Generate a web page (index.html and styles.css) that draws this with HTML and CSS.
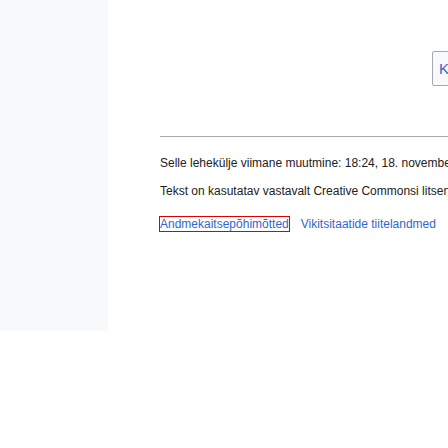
FILE: index.html
```html
<!DOCTYPE html>
<html lang="et">
<head>
<meta charset="utf-8">
<title>Vikipeedia</title>
<link rel="stylesheet" href="styles.css">
</head>
<body>
<div class="page">
  <aside class="sidebar"></aside>
  <main class="main">
    <div class="toolbar">
      <button class="btn" type="button">Kuva</button>
    </div>
    <hr class="rule">
    <footer class="footer">
      <p class="info">Selle lehekülje viimane muutmine: 18:24, 18. november 2023.</p>
      <p class="info">Tekst on kasutatav vastavalt Creative Commonsi litsentsile „Autorile viitamine + jagamine samadel tingimustel“; sellele võivad lisanduda täiendavad tingimused.</p>
      <ul class="links">
        <li><a class="link focus" href="#">Andmekaitsepõhimõtted</a></li>
        <li><a class="link" href="#">Vikitsitaatide tiitelandmed</a></li>
        <li><a class="link" href="#">Lahtiütlused</a></li>
      </ul>
    </footer>
  </main>
</div>
</body>
</html>
```

FILE: styles.css
```css
html, body {
  margin: 0;
  padding: 0;
  background: #ffffff;
  overflow: hidden;
}
body {
  width: 448px;
  height: 448px;
  font-family: "Liberation Sans", Arial, sans-serif;
  color: #202122;
}
.page {
  display: flex;
  align-items: flex-start;
  width: 1000px;
}
.sidebar {
  flex: none;
  width: 108px;
  height: 331px;
  background: #f8f9fa;
}
.main {
  flex: none;
  width: 700px;
  padding-left: 52px;
}
.toolbar {
  display: flex;
  padding-top: 51px;
  padding-left: 272px;
}
.btn {
  box-sizing: border-box;
  height: 35px;
  padding: 0 6px;
  border: 1px solid #a2a9b1;
  border-radius: 2px;
  background: #f8f9fa;
  color: #3366cc;
  font-family: "Liberation Sans", Arial, sans-serif;
  font-size: 15px;
}
.rule {
  margin: 50px 0 0 0;
  border: 0;
  height: 1px;
  background: #a2a9b1;
}
.footer {
  padding-top: 16px;
  font-size: 12px;
  line-height: 20px;
}
.info {
  margin: 0 0 8px 0;
  white-space: nowrap;
}
.links {
  list-style: none;
  margin: 13px 0 0 0;
  padding: 0;
  display: flex;
  gap: 12px;
  white-space: nowrap;
}
.link {
  color: #3366cc;
  text-decoration: none;
}
.focus {
  outline: 1px solid #e00000;
}
```
